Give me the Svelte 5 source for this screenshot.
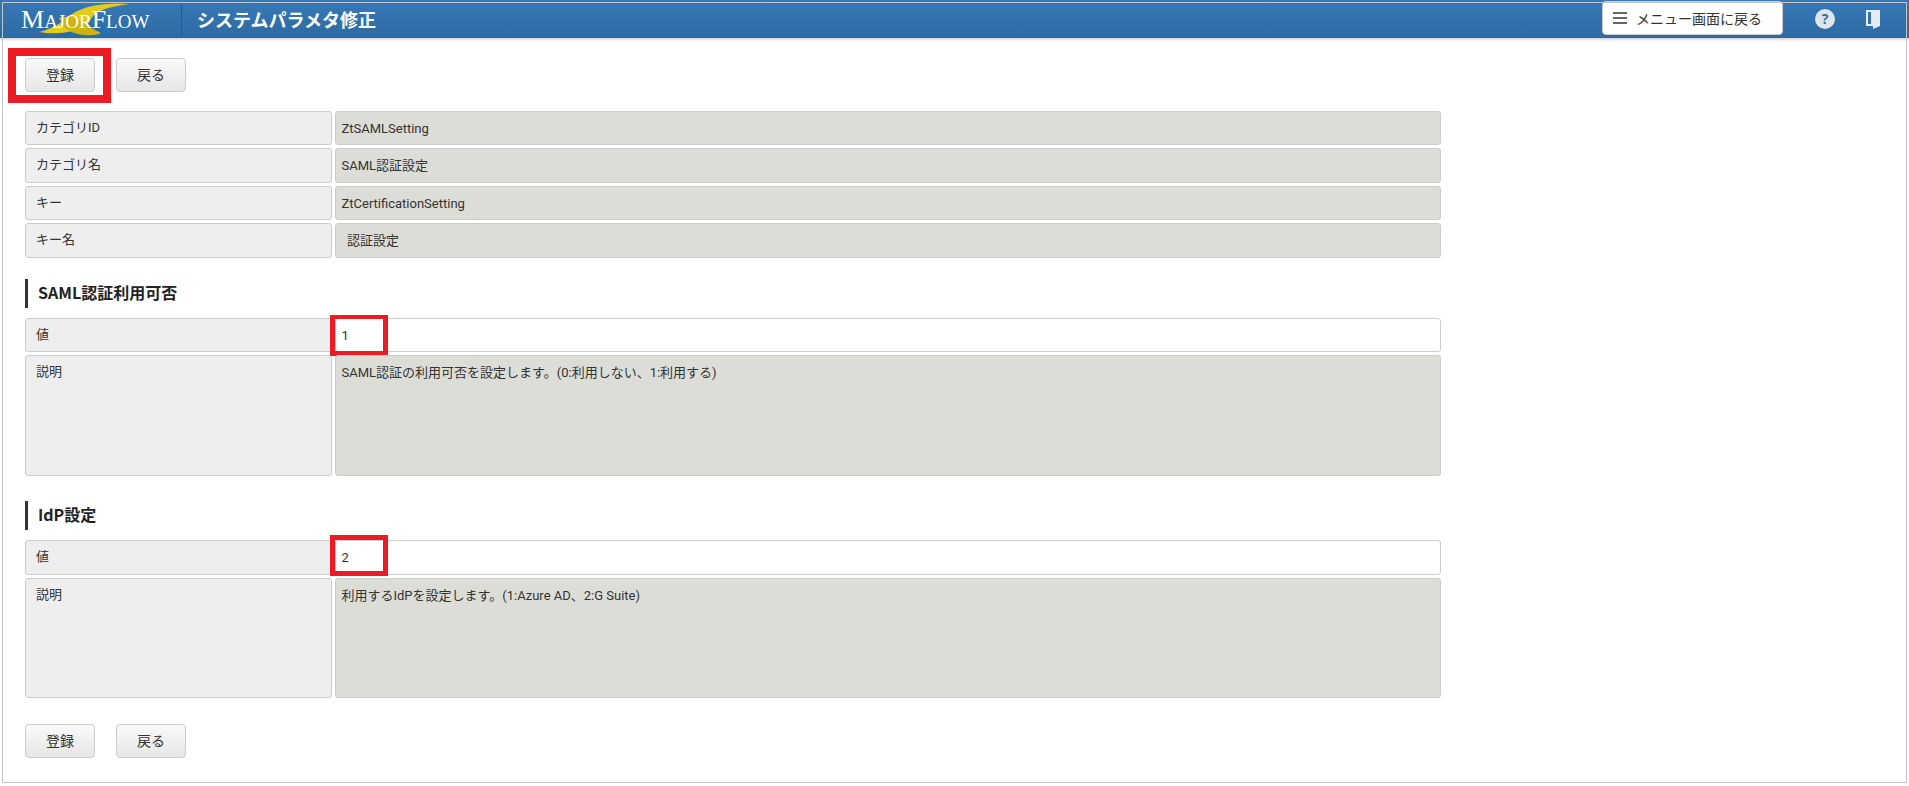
<script>
	const infoRows = [
		{ label: 'カテゴリID', value: 'ZtSAMLSetting' },
		{ label: 'カテゴリ名', value: 'SAML認証設定' },
		{ label: 'キー', value: 'ZtCertificationSetting' },
		{ label: 'キー名', value: '認証設定', indent: true }
	];

	const sections = [
		{ title: 'SAML認証利用可否', value: '1', note: 'SAML認証の利用可否を設定します。(0:利用しない、1:利用する)' },
		{ title: 'IdP設定', value: '2', note: '利用するIdPを設定します。(1:Azure AD、2:G Suite)' }
	];
</script>

<div class="page">
	<header class="topbar">
		<div class="logo">
			<svg class="swoosh" viewBox="0 0 130 38" aria-hidden="true">
				<path d="M38 31C60 35 86 29 90 18C94 10 106 6 128 3C108 1 84 4 71 13C61 21 52 28 38 31Z" fill="#e3cb1c" />
				<path d="M58 17C72 12 82 23 100 32C92 36 72 35 63 26Z" fill="#cfb314" />
			</svg>
			<span class="logo-text"><b>M</b>AJOR<b>F</b>LOW</span>
		</div>
		<h1>システムパラメタ修正</h1>
		<button class="menu-btn">
			<span class="burger"><i></i><i></i><i></i></span>
			メニュー画面に戻る
		</button>
		<svg class="help" viewBox="0 0 20 20" aria-hidden="true">
			<circle cx="10" cy="10" r="10" fill="#dfe5ea" />
			<text x="10" y="15" text-anchor="middle" class="help-mark">?</text>
		</svg>
		<svg class="door" viewBox="0 0 16 20" aria-hidden="true">
			<path d="M1 1H15V17L8 20V17H1ZM3 3V15H6V3Z" fill="#e6ecf1" fill-rule="evenodd" />
		</svg>
	</header>

	<main class="content">
		<div class="actions top">
			<span class="mark-wrap">
				<button>登録</button>
				<span class="mark thick"></span>
			</span>
			<button>戻る</button>
		</div>

		<div class="rows">
			{#each infoRows as row}
				<div class="row">
					<div class="label">{row.label}</div>
					<div class="value" class:indent={row.indent}>{row.value}</div>
				</div>
			{/each}
		</div>

		{#each sections as s, i}
			<h2 class:first={i === 0}>{s.title}</h2>
			<div class="rows">
				<div class="row">
					<div class="label">値</div>
					<div class="value input">
						{s.value}
						<span class="mark thin" class:lower={i === 1}></span>
					</div>
				</div>
				<div class="row tall">
					<div class="label">説明</div>
					<div class="value">{s.note}</div>
				</div>
			</div>
		{/each}

		<div class="actions bottom">
			<button>登録</button>
			<button>戻る</button>
		</div>
	</main>

	<div class="frame"></div>
</div>

<style>
	:global(body) {
		margin: 0;
		background: #fff;
	}

	.page {
		position: relative;
		height: 786px;
		overflow: hidden;
		font-family: Roboto, 'Noto Sans CJK JP', sans-serif;
		font-size: 13px;
		color: #333;
	}

	.frame {
		position: absolute;
		left: 2px;
		top: 2px;
		width: 1903px;
		height: 779px;
		border: 1px solid #c4c4c4;
		pointer-events: none;
	}

	.topbar {
		display: flex;
		align-items: center;
		height: 38px;
		background: linear-gradient(#3679b8, #2d6aa1);
		box-shadow: 0 1px 3px rgba(0, 0, 0, 0.25);
		color: #fff;
	}

	.logo {
		position: relative;
		width: 181px;
		height: 31px;
		flex: none;
		border-right: 1px solid #24598a;
		box-sizing: content-box;
		margin-right: 15px;
	}

	.swoosh {
		position: absolute;
		left: 1px;
		top: -3px;
		width: 130px;
		height: 38px;
	}

	.logo-text {
		position: absolute;
		left: 21px;
		top: 4px;
		font-family: 'Liberation Serif', serif;
		font-size: 19px;
		line-height: 24px;
		white-space: nowrap;
	}

	.logo-text b {
		font-weight: 400;
		font-size: 26px;
	}

	h1 {
		margin: 0;
		font-family: 'Noto Sans CJK JP', sans-serif;
		font-size: 18px;
		font-weight: 700;
		flex: 1;
	}

	.menu-btn {
		display: flex;
		align-items: center;
		gap: 9px;
		width: 181px;
		height: 34px;
		margin-bottom: 3px;
		padding: 0 0 0 10px;
		border: 1px solid #ccc;
		border-radius: 4px;
		background: #fff;
		color: #333;
		font: inherit;
		font-size: 14px;
	}

	.burger {
		display: flex;
		flex-direction: column;
		gap: 3px;
		width: 14px;
	}

	.burger i {
		display: block;
		height: 2px;
		background: #666;
	}

	.help {
		width: 20px;
		height: 20px;
		margin-left: 32px;
		flex: none;
	}

	.help-mark {
		font-size: 14px;
		font-weight: 700;
		fill: #2f6ea8;
		font-family: 'Open Sans', sans-serif;
	}

	.door {
		width: 16px;
		height: 20px;
		margin-left: 30px;
		margin-right: 28px;
		flex: none;
	}

	.content {
		padding: 20px 0 0 25px;
		width: 1417px;
	}

	.actions {
		display: flex;
		gap: 21px;
	}

	.actions.bottom {
		margin-top: 26px;
	}

	.actions button {
		width: 70px;
		height: 34px;
		border: 1px solid #ccc;
		border-radius: 4px;
		background: linear-gradient(#fafafa, #e6e6e6);
		color: #333;
		font: inherit;
		font-size: 14px;
		padding: 0 0 2px;
	}

	.mark-wrap {
		position: relative;
		display: block;
		height: 34px;
	}

	.mark {
		position: absolute;
		border-style: solid;
		border-color: #ed1c24;
		box-sizing: border-box;
		pointer-events: none;
	}

	.mark.thick {
		left: -17px;
		top: -10px;
		width: 103px;
		height: 55px;
		border-width: 8px;
	}

	.mark.thin {
		left: -6px;
		top: -4px;
		width: 58px;
		height: 41px;
		border-width: 4px 5px 5px;
	}

	.mark.thin.lower {
		top: -6px;
		border-top-width: 5px;
	}

	.rows {
		display: flex;
		flex-direction: column;
		gap: 3px;
	}

	.actions.top + .rows {
		margin-top: 19px;
	}

	.row {
		display: flex;
		gap: 3px;
		height: 34.4px;
	}

	.row.tall {
		height: 120.4px;
	}

	.label,
	.value {
		box-sizing: border-box;
		border: 1px solid #ccc;
		border-radius: 3px;
		line-height: 16px;
	}

	.label {
		width: 307px;
		padding: 8px 10px;
		background: #eee;
	}

	.value {
		position: relative;
		width: 1106px;
		padding: 9px 5.5px;
		background: #ddddd7;
	}

	.value.indent {
		padding-left: 11px;
	}

	.value.input {
		background: #fff;
	}

	h2 {
		display: flex;
		align-items: center;
		box-sizing: border-box;
		height: 29px;
		margin: 25.5px 0 10px;
		padding: 0 0 3px 10px;
		border-left: 3px solid #333;
		font-family: 'Noto Sans CJK JP', sans-serif;
		font-size: 16px;
		font-weight: 700;
		color: #222;
	}

	h2.first {
		margin-top: 21.5px;
	}
</style>
